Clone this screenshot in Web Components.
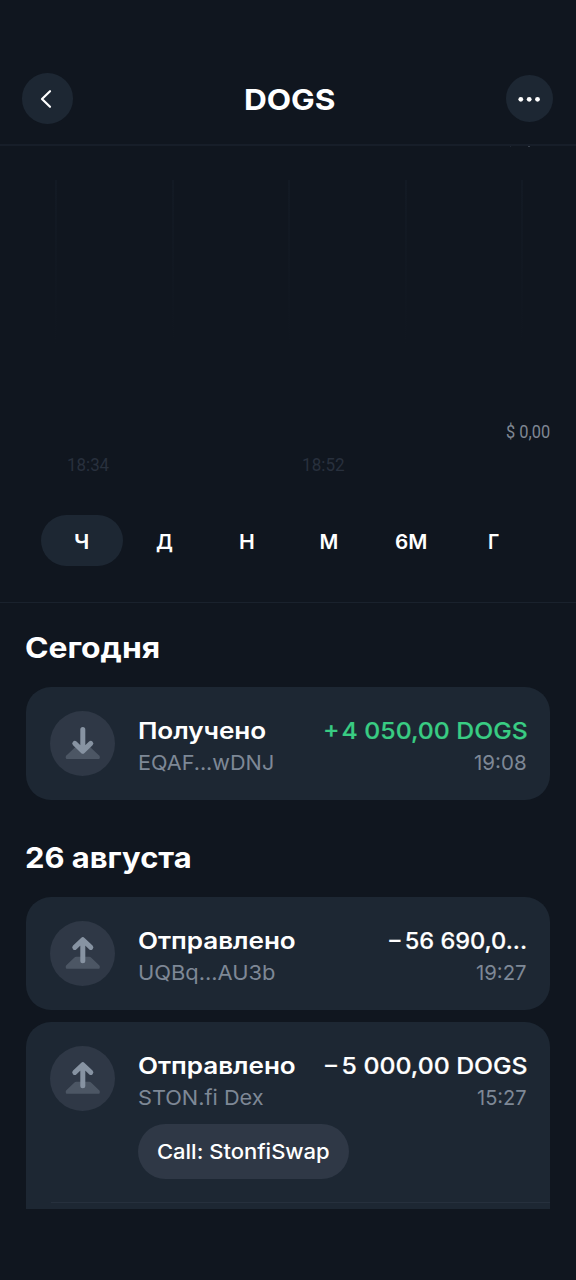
<!DOCTYPE html>
<html lang="ru">
<head>
<meta charset="utf-8">
<title>DOGS</title>
<style>
html,body{margin:0;padding:0;background:#10161f}
body{width:576px;height:1280px;overflow:hidden;font-family:Inter,"Noto Sans",sans-serif;color:#fff}
</style>
</head>
<body>
<wallet-screen></wallet-screen>
<script>
const define = (name, html, setup) => {
  const tpl = document.createElement('template');
  tpl.innerHTML = html;
  customElements.define(name, class extends HTMLElement {
    connectedCallback() {
      if (this.shadowRoot) return;
      this.attachShadow({ mode: 'open' });
      const frag = tpl.content.cloneNode(true);
      if (setup) setup(this, frag);
      this.shadowRoot.append(frag);
    }
  });
};

/* One line of text, stretched so that its ink is exactly `w` pixels wide. */
const pen = document.createElement('canvas').getContext('2d');
customElements.define('fit-text', class extends HTMLElement {
  connectedCallback() {
    if (this.shadowRoot) return;
    const root = this.attachShadow({ mode: 'open' });
    root.innerHTML = `<style>
      :host{display:block;flex:none;white-space:pre}
      span{display:inline-block;transform-origin:0 0;white-space:pre}
    </style><span><slot></slot></span>`;
    const w = parseFloat(this.getAttribute('w'));
    const cs = getComputedStyle(this);
    pen.font = `${cs.fontWeight} ${cs.fontSize} ${cs.fontFamily}`;
    const m = pen.measureText(this.textContent);
    const s = w / (m.actualBoundingBoxLeft + m.actualBoundingBoxRight);
    this.style.width = w + 'px';
    root.querySelector('span').style.transform =
      `translateX(${m.actualBoundingBoxLeft * s}px) scaleX(${s})`;
  }
});

define('round-button', `<style>
  :host{display:grid;place-items:center;border-radius:50%;background:#1d2733;flex:none}
  ::slotted(svg){display:block}
</style><slot></slot>`);

define('top-bar', `<style>
  :host{display:flex;box-sizing:border-box;height:146px;padding:52px 23px 0 21.5px;align-items:center;
    justify-content:space-between;border-bottom:2px solid #171e29}
  .back{width:51.5px;height:51px;margin-top:1.500px}
  .more{width:47.5px;height:47.5px;margin-top:1px}
  fit-text{font-size:28.9px;font-weight:700;line-height:36px;margin:3px 0 0 1px}
</style>
<round-button class="back"><svg width="24" height="24" viewBox="0 0 24 24" fill="none" stroke="#fff" stroke-width="2.2" stroke-linecap="round" stroke-linejoin="round"><path d="M15 4.2 7 12l8 7.800"/></svg></round-button>
<fit-text w="89.5">DOGS</fit-text>
<round-button class="more"><svg width="24" height="8" viewBox="0 0 24 8" fill="#fff"><circle cx="3.800" cy="4.300" r="2.400"/><circle cx="12.200" cy="4.300" r="2.400"/><circle cx="20.500" cy="4.300" r="2.400"/></svg></round-button>`);

define('price-chart', `<style>
  :host{display:flex;flex-direction:column;height:368.5px;overflow:hidden;
    font:400 18px/20px Roboto,sans-serif;color:#7f8793}
  .row{display:flex;justify-content:flex-end;padding-right:26px;flex:none}
  .ticks{display:flex;gap:17px;margin-top:-1px;padding-left:510px;height:2px;flex:none;position:relative}
  .ticks i{width:1px;height:2px;background:#202733}
  .ticks i+i{width:2px;background:#39414c}
  .grid{display:flex;height:242px;margin-top:33px;padding-left:55px;gap:114.500px;flex:none}
  .grid i{width:2px;height:165px;background:linear-gradient(#131a24,#10161f)}
  .times{display:flex;padding-left:67.500px;gap:194.500px;margin-top:13px;color:#28303d}
</style>
<div class="ticks"><i></i><i></i></div>
<div class="grid"><i></i><i></i><i></i><i></i><i></i></div>
<div class="row"><fit-text w="44">$ 0,00</fit-text></div>
<div class="times"><fit-text w="41">18:34</fit-text><fit-text w="41.500">18:52</fit-text></div>`);

define('period-tab', `<style>
  :host{display:flex;align-items:center;justify-content:center;height:51.5px;border-radius:26px;
    font-size:20.400px;font-weight:600;line-height:28px}
  :host([active]){background:#1d2733}
  fit-text{margin:3.500px 1px 0 0}
</style><fit-text></fit-text>`, (host, frag) => {
  const t = frag.querySelector('fit-text');
  t.textContent = host.getAttribute('label');
  t.setAttribute('w', host.getAttribute('w'));
});

define('period-tabs', `<style>
  :host{display:grid;grid-template-columns:repeat(6,1fr);box-sizing:border-box;height:88.5px;
    padding:0 40.500px 0 41px;align-items:start;border-bottom:1px solid #1a222d}
</style>
<period-tab active label="Ч" w="12.800"></period-tab><period-tab label="Д" w="16.500"></period-tab><period-tab label="Н" w="13.500"></period-tab><period-tab label="М" w="17"></period-tab><period-tab label="6М" w="30.500"></period-tab><period-tab label="Г" w="10.500"></period-tab>`);

define('day-heading', `<style>
  :host{display:block;font-size:28.500px;font-weight:700;line-height:36px;padding-left:25.500px}
</style><slot></slot>`);

define('transfer-icon', `<style>
  :host{display:block;width:65px;height:65px;border-radius:50%;background:#2f3846;flex:none}
  svg{display:block}
</style><svg width="65" height="65" viewBox="0 0 65 65" fill="none"></svg>`, (host, frag) => {
  const up = host.getAttribute('dir') === 'up';
  frag.querySelector('svg').innerHTML =
    `<path fill="#4c5664" d="${up
      ? 'M26.300 35.800H39.200Q40.400 35.800 41.300 36.700L49.400 44.600Q50.500 46 49.300 47.700H16.300Q15 46 16.100 44.600L24.200 36.700Q25.100 35.800 26.300 35.800Z'
      : 'M26 35.500H39.500L49.400 44.800Q50.500 46.200 49.300 48H16.300Q15 46.200 16.100 44.800Z'}"/>` +
    `<path stroke="#8793a2" stroke-width="5" stroke-linecap="round" stroke-linejoin="round" d="${up
      ? 'M32.800 39.800V19M24.800 26.400 32.800 18.700l8 7.700'
      : 'M32.800 18.600V39.800M24.800 32.400 32.800 40.100l8-7.700'}"/>`;
});

define('transfer-card', `<style>
  :host{display:block;box-sizing:border-box;margin:0 26px 0 25.500px;height:112.700px;padding:24px 24px 0;
    border-radius:25px;background:#1d2733}
  :host([cut]){height:187px;border-radius:25px 25px 0 0}
  .row{display:flex;align-items:flex-start}
  .col{padding-top:4px;margin-left:24.500px;display:flex;flex-direction:column;flex:none}
  .end{margin-left:auto;align-items:flex-end}
  .main{font-size:23.300px;font-weight:600;line-height:32px}
  .end .main{font-weight:500;-webkit-text-stroke:.2px}
  .sub{font-size:20.400px;font-weight:400;line-height:32.400px;color:#7e8896}
  :host([plus]) .end .main{color:#39cc83}
</style>
<div class="row"><transfer-icon></transfer-icon>
<div class="col"><fit-text class="main t"></fit-text><fit-text class="sub a"></fit-text></div>
<div class="col end"><fit-text class="main s"></fit-text><fit-text class="sub h"></fit-text></div></div>
<slot></slot>`, (host, frag) => {
  frag.querySelector('transfer-icon').setAttribute('dir', host.getAttribute('dir'));
  for (const [sel, attr] of [['.t', 'kind'], ['.a', 'address'], ['.s', 'sum'], ['.h', 'time']]) {
    const [text, w] = host.getAttribute(attr).split('|');
    const el = frag.querySelector(sel);
    el.textContent = text;
    el.setAttribute('w', w);
  }
});

define('comment-pill', `<style>
  :host{display:flex;align-items:center;box-sizing:border-box;width:211px;height:55px;padding:1px 0 0 20px;
    margin:9px 0 0 88.700px;border-radius:27.500px;background:#2f3846;font-size:20.400px;font-weight:500;line-height:28px}
</style><slot></slot>`);

define('card-divider', `<style>
  :host{display:block;height:1px;margin:22.800px -24px 0 1.500px;background:#26303d}
</style>`);

define('wallet-screen', `<style>
  :host{display:flex;flex-direction:column;height:1280px;overflow:hidden}
  :host>*{flex:none}
  .d1{margin:27px 0 21px}
  .d2{margin:40.300px 0 21px}
  .next{margin-top:12.800px}
</style>
<top-bar></top-bar>
<price-chart></price-chart>
<period-tabs></period-tabs>
<day-heading class="d1"><fit-text w="132.500">Сегодня</fit-text></day-heading>
<transfer-card plus dir="down" kind="Получено|127" address="EQAF...wDNJ|133.5" sum="+&#8202;4 050,00 DOGS|201.5" time="19:08|52"></transfer-card>
<day-heading class="d2"><fit-text w="164">26 августа</fit-text></day-heading>
<transfer-card dir="up" kind="Отправлено|156.5" address="UQBq...AU3b|136" sum="−&#8202;56 690,0...|137" time="19:27|50"></transfer-card>
<transfer-card class="next" cut dir="up" kind="Отправлено|156.5" address="STON.fi Dex|124.5" sum="−&#8202;5 000,00 DOGS|201.5" time="15:27|49">
<comment-pill><fit-text w="171">Call: StonfiSwap</fit-text></comment-pill>
<card-divider></card-divider>
</transfer-card>`);
</script>
</body>
</html>
